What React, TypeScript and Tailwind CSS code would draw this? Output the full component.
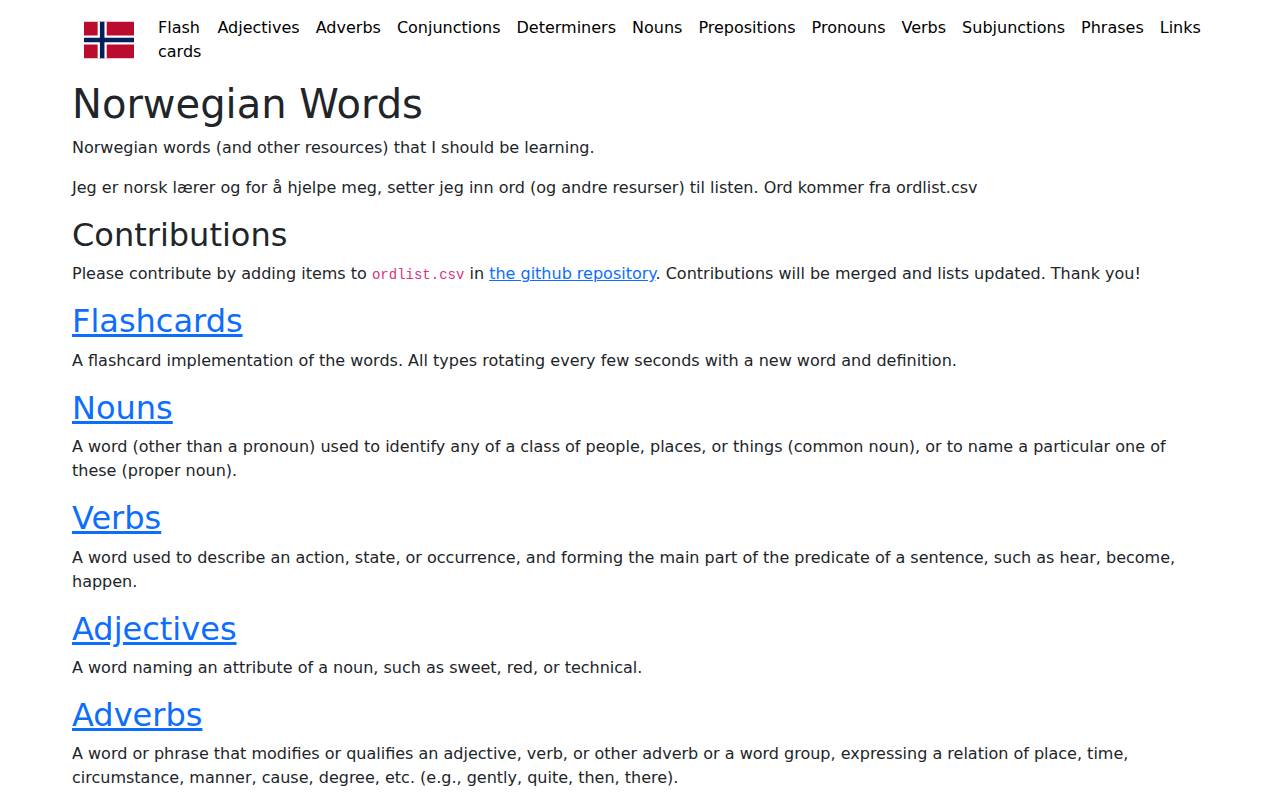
const navLinks = [
  "Flash cards",
  "Adjectives",
  "Adverbs",
  "Conjunctions",
  "Determiners",
  "Nouns",
  "Prepositions",
  "Pronouns",
  "Verbs",
  "Subjunctions",
  "Phrases",
  "Links",
];

const sections = [
  {
    title: "Flashcards",
    text: "A flashcard implementation of the words. All types rotating every few seconds with a new word and definition.",
  },
  {
    title: "Nouns",
    text: "A word (other than a pronoun) used to identify any of a class of people, places, or things (common noun), or to name a particular one of these (proper noun).",
  },
  {
    title: "Verbs",
    text: "A word used to describe an action, state, or occurrence, and forming the main part of the predicate of a sentence, such as hear, become, happen.",
  },
  {
    title: "Adjectives",
    text: "A word naming an attribute of a noun, such as sweet, red, or technical.",
  },
  {
    title: "Adverbs",
    text: "A word or phrase that modifies or qualifies an adjective, verb, or other adverb or a word group, expressing a relation of place, time, circumstance, manner, cause, degree, etc. (e.g., gently, quite, then, there).",
  },
];

function Flag() {
  return (
    <svg viewBox="0 0 22 16" className="size-[50px]" role="img" aria-label="Norway">
      <path fill="#ba0c2f" d="M0 0h22v16H0z" />
      <path fill="#fff" d="M0 6h22v4H0zM6 0h4v16H6z" />
      <path fill="#00205b" d="M0 7h22v2H0zM7 0h2v16H7z" />
    </svg>
  );
}

export default function App() {
  return (
    <div className="mx-auto max-w-[1160px] px-3 font-['DejaVu_Sans',sans-serif] text-base text-[#212529]">

      {/* Navbar */}
      <nav className="flex items-center px-3 py-2">

        <a href="#" className="mr-4 shrink-0">
          <Flag />
        </a>

        <ul className="flex grow text-black">
          {navLinks.map((link) => (
            <li key={link}>
              <a href="#" className="block p-2">
                {link}
              </a>
            </li>
          ))}
        </ul>

      </nav>

      {/* Intro */}
      <h1 className="mb-2 text-[40px] leading-12">Norwegian Words</h1>
      <p className="mb-4">
        Norwegian words (and other resources) that I should be learning.
      </p>
      <p className="mb-4">
        Jeg er norsk lærer og for å hjelpe meg, setter jeg inn ord (og andre
        resurser) til listen. Ord kommer fra ordlist.csv
      </p>

      <h2 className="mb-2 text-[32px] leading-[1.2]">Contributions</h2>
      <p className="mb-4">
        Please contribute by adding items to{" "}
        <code className="font-['Liberation_Mono',monospace] text-sm text-[#d63384]">
          ordlist.csv
        </code>{" "}
        in{" "}
        <a href="#" className="text-[#0d6efd] underline">
          the github repository
        </a>
        . Contributions will be merged and lists updated. Thank you!
      </p>

      {/* Word lists */}
      {sections.map((section) => (
        <section key={section.title}>
          <h2 className="mb-2 text-[32px] leading-[1.2]">
            <a href="#" className="text-[#0d6efd] underline">
              {section.title}
            </a>
          </h2>
          <p className="mb-4">{section.text}</p>
        </section>
      ))}

    </div>
  );
}
